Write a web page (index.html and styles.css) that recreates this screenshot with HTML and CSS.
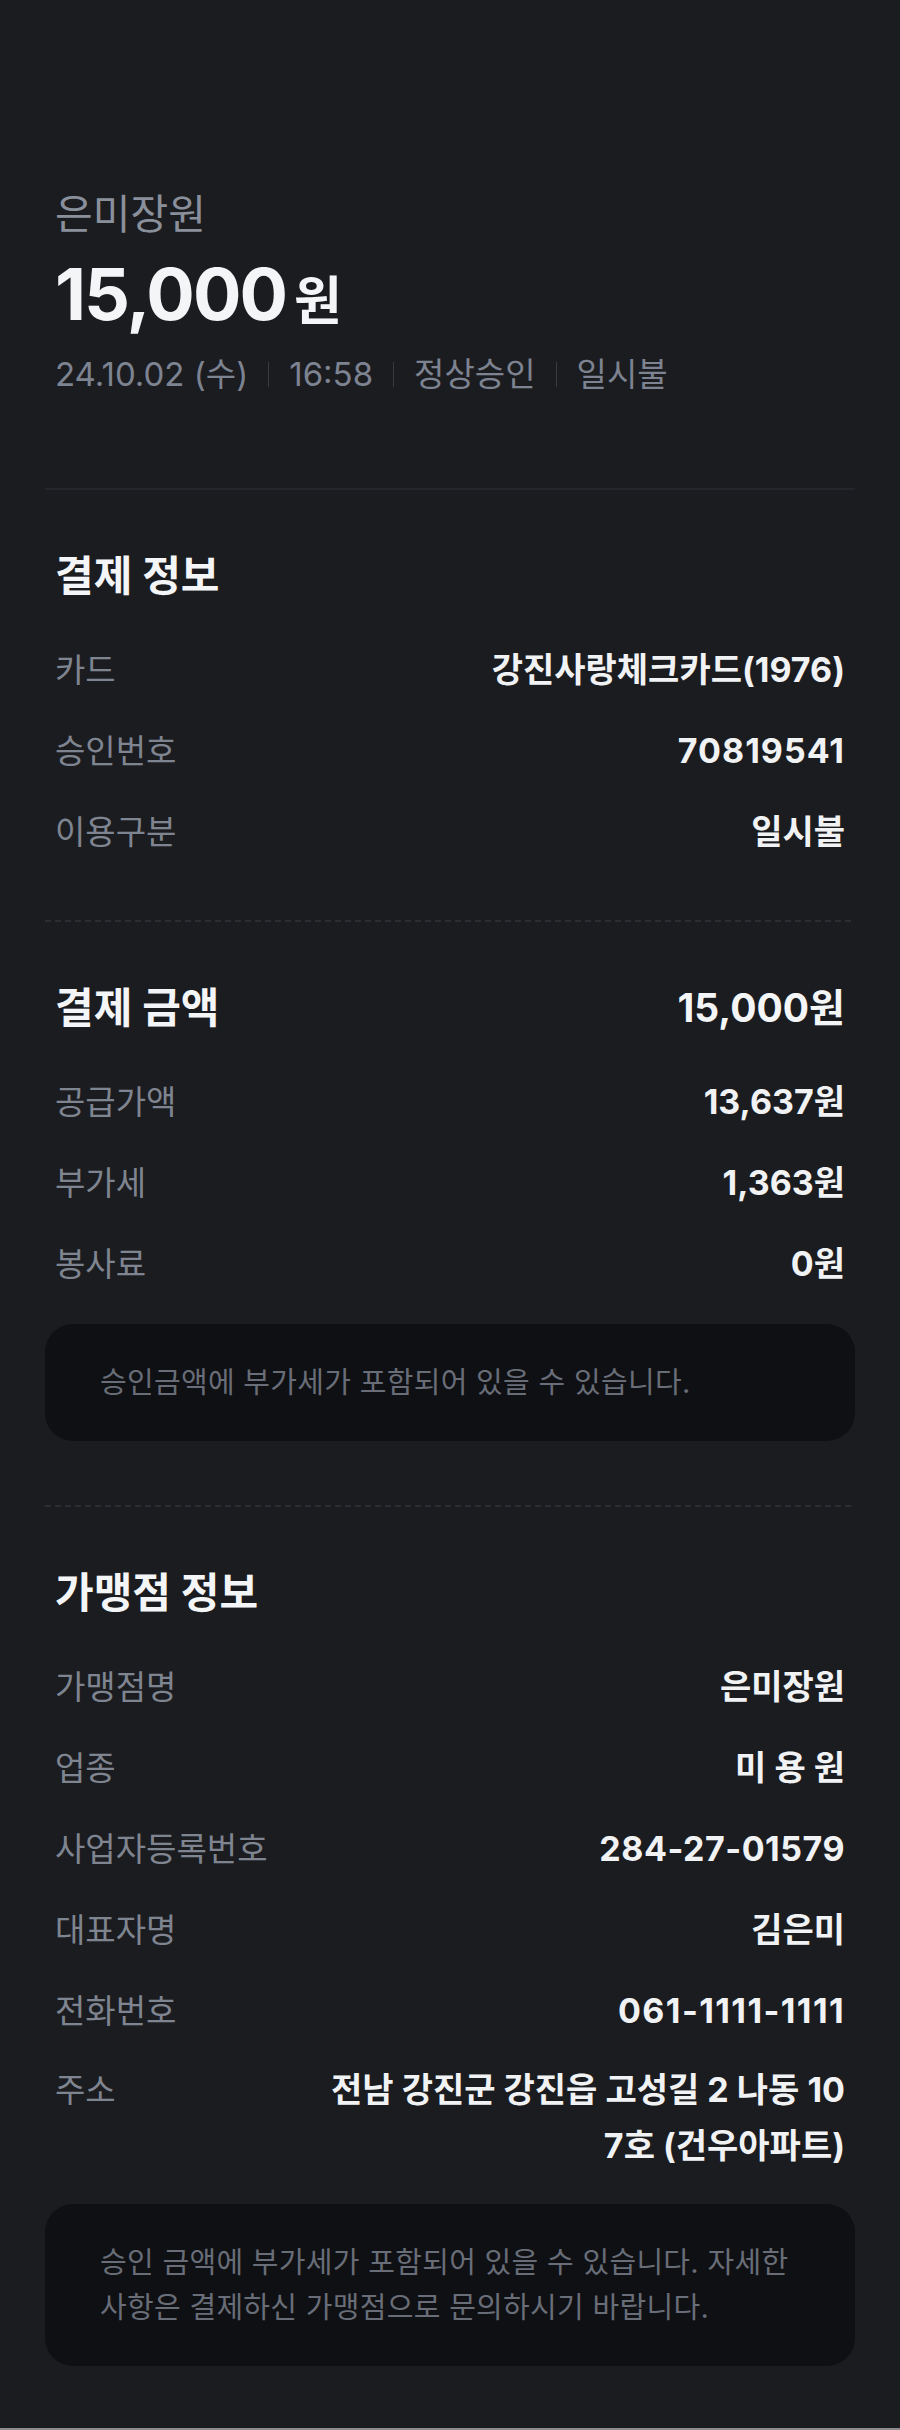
FILE: index.html
```html
<!DOCTYPE html>
<html lang="ko">
<head>
<meta charset="utf-8">
<title>결제 상세</title>
<link rel="stylesheet" href="styles.css">
</head>
<body>
<main class="page">
  <header class="header">
    <div class="merchant">은미장원</div>
    <div class="amount"><span class="amount-num">15,000</span><span class="amount-unit">원</span></div>
    <div class="meta">
      <span>24.10.02 (수)</span><span class="sep"></span><span>16:58</span><span class="sep"></span><span>정상승인</span><span class="sep"></span><span>일시불</span>
    </div>
  </header>
  <div class="divider"></div>

  <section class="section">
    <h2 class="heading">결제 정보</h2>
    <div class="rows">
      <div class="row"><span class="label">카드</span><span class="value">강진사랑체크카드(1976)</span></div>
      <div class="row"><span class="label">승인번호</span><span class="value num">70819541</span></div>
      <div class="row"><span class="label">이용구분</span><span class="value">일시불</span></div>
    </div>
  </section>
  <div class="divider dotted"></div>

  <section class="section">
    <div class="heading-row">
      <h2 class="heading">결제 금액</h2>
      <span class="heading-value">15,000원</span>
    </div>
    <div class="rows">
      <div class="row"><span class="label">공급가액</span><span class="value">13,637원</span></div>
      <div class="row"><span class="label">부가세</span><span class="value">1,363원</span></div>
      <div class="row"><span class="label">봉사료</span><span class="value">0원</span></div>
    </div>
    <div class="note">승인금액에 부가세가 포함되어 있을 수 있습니다.</div>
  </section>
  <div class="divider dotted"></div>

  <section class="section last">
    <h2 class="heading">가맹점 정보</h2>
    <div class="rows">
      <div class="row"><span class="label">가맹점명</span><span class="value">은미장원</span></div>
      <div class="row"><span class="label">업종</span><span class="value">미 용 원</span></div>
      <div class="row"><span class="label">사업자등록번호</span><span class="value num-s">284-27-01579</span></div>
      <div class="row"><span class="label">대표자명</span><span class="value">김은미</span></div>
      <div class="row"><span class="label">전화번호</span><span class="value num-l">061-1111-1111</span></div>
      <div class="row row-address"><span class="label">주소</span><span class="value">전남 강진군 강진읍 고성길 2 나동 10<br>7호 (건우아파트)</span></div>
    </div>
    <div class="note note-tight">승인 금액에 부가세가 포함되어 있을 수 있습니다. 자세한 사항은 결제하신 가맹점으로 문의하시기 바랍니다.</div>
  </section>
</main>
</body>
</html>
```

FILE: styles.css
```css
html {
  background: #8a8b8f;
}
body {
  margin: 0;
  background: #8a8b8f;
  font-family: "Inter", "Noto Sans CJK KR", sans-serif;
  color: #f1f2f4;
}
.page {
  background: #1b1c20;
  padding: 0 45px;
  min-height: 2428px;
  box-sizing: border-box;
}
.header {
  padding: 189px 10px 94px;
}
.merchant {
  font-size: 41px;
  line-height: 50px;
  color: #8a909b;
}
.amount {
  margin-top: 15px;
  font-size: 72px;
  line-height: 80px;
  font-weight: 700;
  color: #f4f5f7;
}
.amount-num {
  letter-spacing: -2px;
}
.amount-unit {
  font-size: 52px;
  line-height: 1;
  margin-left: 8px;
}
.meta {
  margin-top: 20px;
  font-size: 33px;
  line-height: 40px;
  color: #7d8390;
  display: flex;
  align-items: center;
}
.sep {
  display: inline-block;
  width: 1px;
  height: 25px;
  background: #393b41;
  margin: 0 20px;
}
.divider {
  height: 2px;
  background: #25262b;
}
.divider.dotted {
  background: repeating-linear-gradient(90deg, #2c2d33 0 6px, transparent 6px 10px);
}
.section {
  padding: 58px 10px 64px;
}
.section.last {
  padding-bottom: 61px;
}
.heading-row {
  display: flex;
  justify-content: space-between;
  align-items: center;
}
.heading {
  margin: 0;
  font-size: 42px;
  line-height: 56px;
  font-weight: 700;
  color: #f4f5f7;
}
.heading-value {
  font-size: 39px;
  line-height: 56px;
  font-weight: 700;
  color: #f4f5f7;
}
.rows {
  margin-top: 42px;
  display: flex;
  flex-direction: column;
  gap: 33px;
}
.row {
  display: flex;
  justify-content: space-between;
  align-items: flex-start;
  line-height: 48px;
}
.label {
  font-size: 33px;
  color: #7f8590;
  flex-shrink: 0;
}
.value {
  font-size: 34px;
  font-weight: 700;
  color: #f1f2f4;
  text-align: right;
}
.value.num {
  letter-spacing: 1px;
}
.value.num-s {
  letter-spacing: 0.5px;
}
.value.num-l {
  letter-spacing: 1.4px;
}
.row-address {
  line-height: 56px;
  margin-top: -6px;
}
.note {
  margin: 36px -10px 0;
  background: #0f1013;
  border-radius: 28px;
  padding: 36px 55px;
  font-size: 29px;
  letter-spacing: 0.3px;
  line-height: 45px;
  color: #686d78;
}
.note-tight {
  margin-top: 30px;
}
```
